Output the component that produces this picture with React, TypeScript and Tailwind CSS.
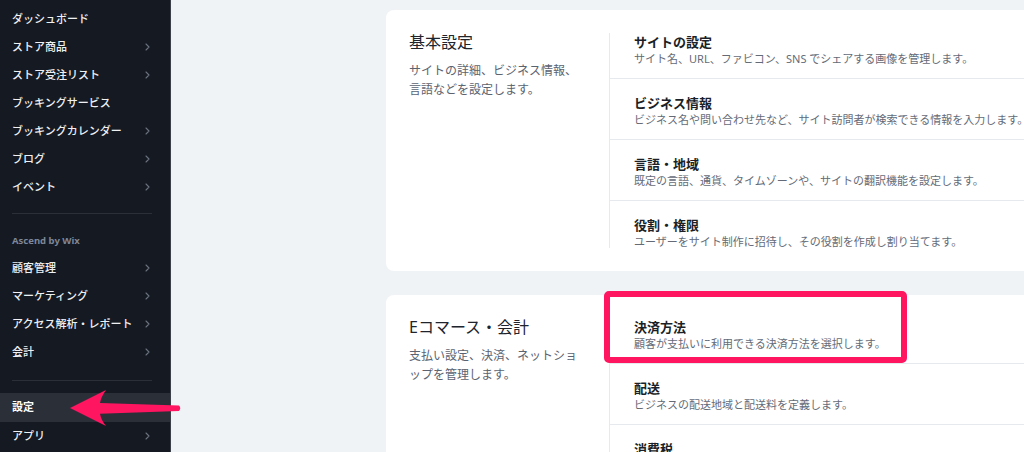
import type { ReactNode } from "react";

const font = {
  fontFamily: '"Noto Sans", "Noto Sans CJK JP", sans-serif',
};

type NavItem = {
  label: string;
  arrow?: boolean;
};

const topItems: NavItem[] = [
  { label: "ダッシュボード" },
  { label: "ストア商品", arrow: true },
  { label: "ストア受注リスト", arrow: true },
  { label: "ブッキングサービス" },
  { label: "ブッキングカレンダー", arrow: true },
  { label: "ブログ", arrow: true },
  { label: "イベント", arrow: true },
];

const ascendItems: NavItem[] = [
  { label: "顧客管理", arrow: true },
  { label: "マーケティング", arrow: true },
  { label: "アクセス解析・レポート", arrow: true },
  { label: "会計", arrow: true },
];

type Row = {
  title: string;
  desc: string;
};

const basicRows: Row[] = [
  {
    title: "サイトの設定",
    desc: "サイト名、URL、ファビコン、SNS でシェアする画像を管理します。",
  },
  {
    title: "ビジネス情報",
    desc: "ビジネス名や問い合わせ先など、サイト訪問者が検索できる情報を入力します。",
  },
  {
    title: "言語・地域",
    desc: "既定の言語、通貨、タイムゾーンや、サイトの翻訳機能を設定します。",
  },
  {
    title: "役割・権限",
    desc: "ユーザーをサイト制作に招待し、その役割を作成し割り当てます。",
  },
];

const commerceRows: Row[] = [
  {
    title: "決済方法",
    desc: "顧客が支払いに利用できる決済方法を選択します。",
  },
  {
    title: "配送",
    desc: "ビジネスの配送地域と配送料を定義します。",
  },
  {
    title: "消費税",
    desc: "商品やサービスに適用する消費税を設定します。",
  },
];

function Chevron() {
  return (
    <svg width="5" height="8" viewBox="0 0 5 8" fill="none">
      <path
        d="M1 1l3 3-3 3"
        stroke="#6b7280"
        strokeWidth="1.1"
        strokeLinecap="round"
        strokeLinejoin="round"
      />
    </svg>
  );
}

function NavRow({ item }: { item: NavItem }) {
  return (
    <div className="flex h-[28px] items-center justify-between pl-3 pr-[20px]">
      <span className="text-[11px] font-medium text-[#eef0f3]">
        {item.label}
      </span>
      {item.arrow && <Chevron />}
    </div>
  );
}

function Sidebar() {
  return (
    <aside className="flex w-[171px] shrink-0 flex-col border-r border-[#3a3f48] bg-[#151922] pt-[5px]">
      {topItems.map((item) => (
        <NavRow key={item.label} item={item} />
      ))}

      <div className="mx-3 mt-[12px] mr-[18px] h-px bg-[#2a2f38]" />

      <div className="mt-[21px] pl-3 text-[9.5px] font-bold leading-[12px] text-[#7d8798]">
        Ascend by Wix
      </div>

      <div className="mt-[7px]">
        {ascendItems.map((item) => (
          <NavRow key={item.label} item={item} />
        ))}
      </div>

      <div className="mx-3 mt-[14px] mr-[18px] h-px bg-[#2a2f38]" />

      <div className="mt-[12px] flex h-[29px] items-center bg-[#2b2f38] pl-3">
        <span className="text-[11px] font-bold text-white">設定</span>
      </div>

      <NavRow item={{ label: "アプリ", arrow: true }} />
    </aside>
  );
}

function SettingsCard({
  heading,
  desc,
  rows,
}: {
  heading: string;
  desc: ReactNode;
  rows: Row[];
}) {
  return (
    <section className="flex w-[760px] shrink-0 rounded-lg bg-white py-[23px]">
      <div className="w-[223px] shrink-0 pl-[23px]">
        <h2 className="text-[16px] leading-[18px] text-[#20242c]">
          {heading}
        </h2>
        <p className="mt-[10px] text-[12px] leading-[19px] text-[#5b6370]">
          {desc}
        </p>
      </div>

      <div className="h-[215px] flex-1 overflow-hidden border-l border-[#e6e9ed]">
        <div className="-mt-[15px]">
          {rows.map((row, i) => (
            <div
              key={row.title}
              className={`h-[61px] pl-6 pt-4 ${
                i < rows.length - 1 ? "border-b border-[#e6e9ed]" : ""
              }`}
            >
              <div className="text-[13px] font-bold leading-4 text-[#1b1f27]">
                {row.title}
              </div>
              <div className="mt-px text-[11px] leading-4 text-[#646b77]">
                {row.desc}
              </div>
            </div>
          ))}
        </div>
      </div>
    </section>
  );
}

function PointerArrow() {
  return (
    <svg
      className="absolute left-[68px] top-[388px]"
      width="114"
      height="40"
      viewBox="0 0 114 40"
    >
      <path
        d="M2 20 L38 2 Q33 9 32 15 L111 17.6 Q113.5 20.3 111 23 L32 25.8 Q33 32 38 38 Z"
        fill="#ff1560"
      />
    </svg>
  );
}

export default function App() {
  return (
    <div
      className="relative flex h-[452px] w-[1024px] overflow-hidden bg-[#f0f3f6]"
      style={font}
    >
      <Sidebar />

      <main className="flex flex-1 flex-col gap-[24px] overflow-hidden pl-[215px] pt-[10px]">
        <SettingsCard
          heading="基本設定"
          desc={
            <>
              サイトの詳細、ビジネス情報、
              <br />
              言語などを設定します。
            </>
          }
          rows={basicRows}
        />
        <SettingsCard
          heading="Eコマース・会計"
          desc={
            <>
              支払い設定、決済、ネットショ
              <br />
              ップを管理します。
            </>
          }
          rows={commerceRows}
        />
      </main>

      {/* annotation overlays */}
      <div className="absolute left-[604px] top-[291px] h-[72px] w-[303px] rounded-[5px] border-[6px] border-[#ff1560]" />
      <PointerArrow />
    </div>
  );
}
